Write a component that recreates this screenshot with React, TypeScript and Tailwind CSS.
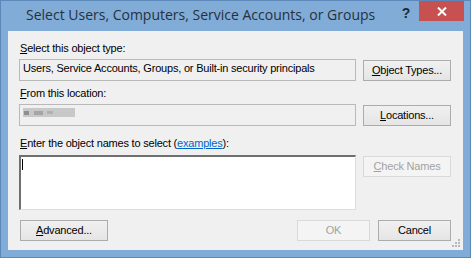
import type { ReactNode } from 'react'

const ui = { fontFamily: '"Liberation Sans", Arial, sans-serif' }

function Btn({
  children,
  disabled,
  className = '',
}: {
  children: ReactNode
  disabled?: boolean
  className?: string
}) {
  return (
    <button
      disabled={disabled}
      className={
        'flex h-[21px] shrink-0 items-center justify-center border pb-[1px] text-[11px] leading-[13px] tracking-[-0.2px] ' +
        (disabled
          ? 'border-[#d9d9d9] bg-[#f4f4f4] text-[#a2a2a2]'
          : 'border-[#acacac] bg-gradient-to-b from-[#f0f0f0] to-[#e5e5e5] text-black') +
        ' ' +
        className
      }
    >
      {children}
    </button>
  )
}

function Label({ children, className = '' }: { children: ReactNode; className?: string }) {
  return (
    <div className={'h-[13px] pl-[1px] text-[11px] leading-[13px] tracking-[-0.2px] text-black ' + className}>
      {children}
    </div>
  )
}

function ReadBox({ children }: { children?: ReactNode }) {
  return (
    <div className="h-[22px] w-[337px] shrink-0 border border-[#b9b9b9] bg-[#f0f0f0] pl-[3px] pt-[2px] text-[11px] leading-[13px] tracking-[-0.2px] text-black">
      {children}
    </div>
  )
}

export default function App() {
  return (
    <div
      className="flex h-[258px] w-[471px] flex-col border border-[#5c88b9] bg-[#80acd7]"
      style={ui}
    >
      {/* title bar */}
      <div className="flex h-[30px] shrink-0 items-start">
        <div
          className="flex-1 pl-[25px] pt-[5px] text-[14px] leading-[18px] text-[#26313c]"
          style={{ fontFamily: '"Open Sans", "Noto Sans", sans-serif' }}
        >
          Select Users, Computers, Service Accounts, or Groups
        </div>
        <div className="w-[26px] pt-[4px] text-center text-[14px] font-bold leading-[16px] text-[#1f2a35]">
          ?
        </div>
        <div className="mr-[6px] flex h-[20px] w-[45px] items-center justify-center bg-[#c75050]">
          <svg width="10" height="9" viewBox="0 0 10 9">
            <path d="M1 0.5 L9 8.5 M9 0.5 L1 8.5" stroke="#fff" strokeWidth="2" />
          </svg>
        </div>
      </div>

      {/* client area */}
      <div className="relative mx-[7px] mb-[7px] flex flex-1 flex-col bg-[#f0f0f0] pl-[11px] pr-[12px] pt-[11px]">
        <Label>
          <u>S</u>elect this object type:
        </Label>
        <div className="mt-[4px] flex gap-[7px]">
          <ReadBox>Users, Service Accounts, Groups, or Built-in security principals</ReadBox>
          <Btn className="mt-[1px] w-[88px]">
            <span>
              <u>O</u>bject Types...
            </span>
          </Btn>
        </div>

        <Label className="mt-[6px]">
          <u>F</u>rom this location:
        </Label>
        <div className="mt-[4px] flex gap-[7px]">
          <ReadBox>
            <div className="mt-[1px] flex h-[9px] w-[52px] items-center bg-[#c8c8c8] blur-[0.7px]">
              <div className="ml-[1px] h-[4px] w-[5px] bg-[#8f8f8f]" />
              <div className="ml-[5px] h-[4px] w-[9px] bg-[#a5a5a5]" />
              <div className="ml-[4px] h-[3px] w-[6px] bg-[#b0b0b0]" />
            </div>
          </ReadBox>
          <Btn className="mt-[1px] w-[88px]">
            <span>
              <u>L</u>ocations...
            </span>
          </Btn>
        </div>

        <Label className="mt-[11px]">
          <u>E</u>nter the object names to select (
          <a className="text-[#0066cc] underline">examples</a>):
        </Label>
        <div className="mt-[5px] flex gap-[7px]">
          <div className="h-[55px] w-[337px] shrink-0 border-b border-l-2 border-r border-t-2 border-b-[#dedede] border-l-[#6f6f6f] border-r-[#dedede] border-t-[#6f6f6f] bg-white pl-[1px] pt-[2px]">
            <div className="h-[11px] w-[1px] bg-black" />
          </div>
          <Btn disabled className="mt-[1px] w-[88px]">
            <span>
              <u>C</u>heck Names
            </span>
          </Btn>
        </div>

        <div className="mt-[10px] flex">
          <Btn className="ml-[1px] w-[88px]">
            <span>
              <u>A</u>dvanced...
            </span>
          </Btn>
          <div className="flex-1" />
          <Btn disabled className="w-[73px]">
            OK
          </Btn>
          <Btn className="ml-[8px] w-[73px]">Cancel</Btn>
        </div>

        {/* size grip */}
        <svg className="absolute bottom-[2px] right-[2px]" width="9" height="9" viewBox="0 0 9 9">
          <rect x="6" y="0" width="2" height="2" fill="#b9b9b9" />
          <rect x="3" y="3" width="2" height="2" fill="#b9b9b9" />
          <rect x="6" y="3" width="2" height="2" fill="#b9b9b9" />
          <rect x="0" y="6" width="2" height="2" fill="#b9b9b9" />
          <rect x="3" y="6" width="2" height="2" fill="#b9b9b9" />
          <rect x="6" y="6" width="2" height="2" fill="#b9b9b9" />
        </svg>
      </div>
    </div>
  )
}
